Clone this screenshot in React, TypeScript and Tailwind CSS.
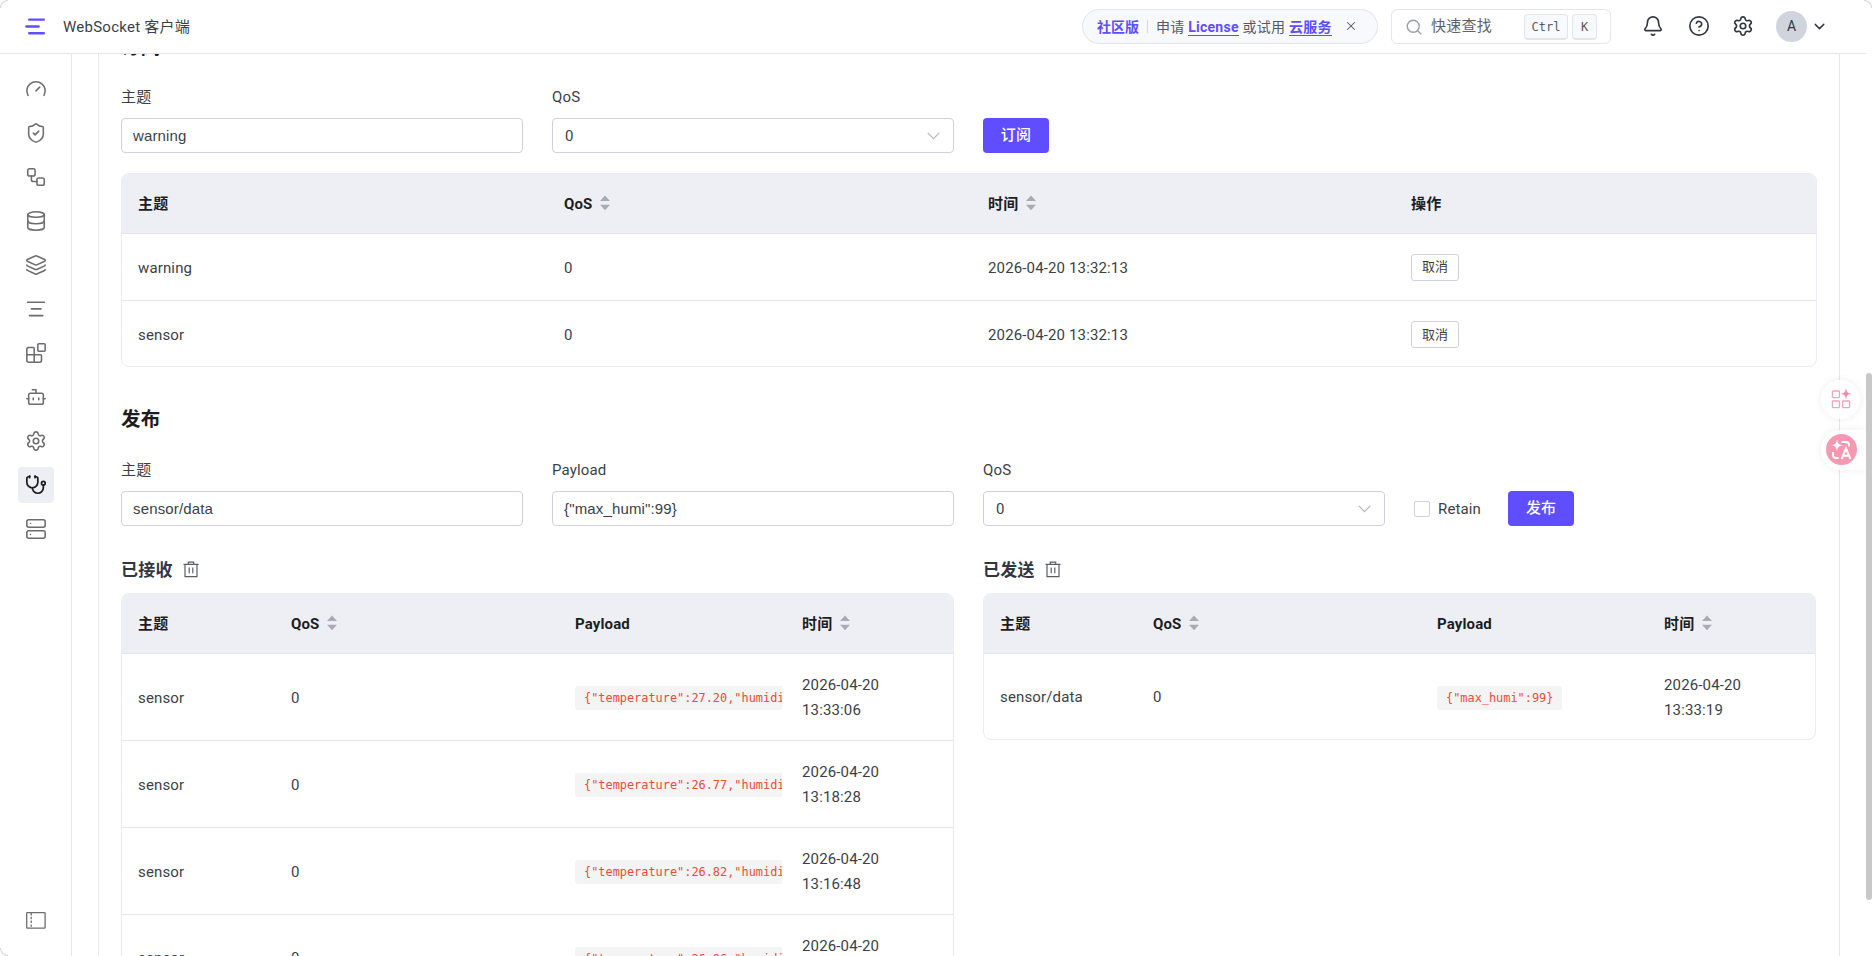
import { useState } from "react";
import type { ReactNode } from "react";
import {
  Bell,
  Blocks,
  Bot,
  ChevronDown,
  CircleQuestionMark,
  Database,
  Gauge,
  Layers,
  Search,
  Server,
  Settings,
  ShieldCheck,
  Stethoscope,
  Workflow,
  X,
} from "lucide-react";

type Message = { topic: string; qos: number; payload: string; date: string; time: string };

const subscriptions = [
  { topic: "warning", qos: 0, time: "2026-04-20 13:32:13" },
  { topic: "sensor", qos: 0, time: "2026-04-20 13:32:13" },
];

const received: Message[] = [
  { topic: "sensor", qos: 0, payload: '{"temperature":27.20,"humidity"', date: "2026-04-20", time: "13:33:06" },
  { topic: "sensor", qos: 0, payload: '{"temperature":26.77,"humidity"', date: "2026-04-20", time: "13:18:28" },
  { topic: "sensor", qos: 0, payload: '{"temperature":26.82,"humidity"', date: "2026-04-20", time: "13:16:48" },
  { topic: "sensor", qos: 0, payload: '{"temperature":26.86,"humidity"', date: "2026-04-20", time: "13:15:08" },
];

const sent: Message[] = [
  { topic: "sensor/data", qos: 0, payload: '{"max_humi":99}', date: "2026-04-20", time: "13:33:19" },
];

function FlowLines() {
  return (
    <svg width="20" height="20" viewBox="0 0 20 20" fill="none" stroke="currentColor" strokeWidth="1.6" strokeLinecap="round">
      <path d="M1.6 3.2h16.8M5.4 9.9h9.6M3.4 16.6h13.4" />
    </svg>
  );
}

const navItems: { key: string; icon: ReactNode }[] = [
  { key: "dashboard", icon: <Gauge size={22} strokeWidth={1.7} /> },
  { key: "security", icon: <ShieldCheck size={22} strokeWidth={1.7} /> },
  { key: "flows", icon: <Workflow size={22} strokeWidth={1.7} /> },
  { key: "data", icon: <Database size={22} strokeWidth={1.7} /> },
  { key: "layers", icon: <Layers size={22} strokeWidth={1.7} /> },
  { key: "queue", icon: <FlowLines /> },
  { key: "plugins", icon: <Blocks size={22} strokeWidth={1.7} /> },
  { key: "bot", icon: <Bot size={22} strokeWidth={1.7} /> },
  { key: "settings", icon: <Settings size={22} strokeWidth={1.7} /> },
  { key: "diagnose", icon: <Stethoscope size={22} strokeWidth={1.9} /> },
  { key: "cluster", icon: <Server size={22} strokeWidth={1.7} /> },
];

function SortCaret() {
  return (
    <svg width="10" height="16" viewBox="0 0 10 16" fill="#a8abb2" className="-mt-[3px] ml-2 shrink-0">
      <path d="M0 6 5 .6 10 6zM0 9.8h10L5 15.2z" />
    </svg>
  );
}

function TrashIcon() {
  return (
    <svg width="16" height="17" viewBox="0 0 16 17" fill="none" stroke="#5b5e66" strokeWidth="1.2" className="-mt-px">
      <path d="M.5 3.4h15M5.3 3.2V1.2h5.4v2M2 3.6v12h12v-12M6.2 6.6v5.6M9.8 6.6v5.6" />
    </svg>
  );
}

function Header() {
  return (
    <header className="flex h-[54px] w-[1866px] shrink-0 items-center border-b border-[#e4e5e8] pl-6">
      <svg width="22" height="20" viewBox="0 0 22 20" fill="none" stroke="#5e4eff" strokeWidth="2.4" strokeLinecap="round">
        <path d="M5.2 2.6h14.6M2.4 9.5h12.2M5.2 16.2h14.6" />
      </svg>
      <span className="ml-[17px] pt-px text-[15px] tracking-[0.25px] text-[#3c3f47]">WebSocket 客户端</span>

      <div className="ml-auto flex h-[35px] w-[296px] items-center rounded-full border border-[#e4e5ea] bg-[#f8f9fd] pl-[14px] text-[14px] text-[#555963]">
        <span className="pt-[2px] font-bold text-[#5e4eff]">社区版</span>
        <span className="mx-2 h-[13px] w-px bg-[#d3d6dd]" />
        <span className="pt-[2px] tracking-[0.25px]">
          申请 <a className="border-b border-[#5e4eff] font-bold text-[#5e4eff]">License</a> 或试用{" "}
          <a className="border-b border-[#5e4eff] font-bold text-[#5e4eff]">云服务</a>
        </span>
        <X size={14} strokeWidth={1.8} className="-mt-px ml-[12px]" />
      </div>

      <div className="ml-[13px] flex h-[35px] w-[220px] items-center rounded-md border border-[#e4e5ea] pl-[13px]">
        <Search size={18} strokeWidth={1.8} className="text-[#979cae]" />
        <span className="ml-2 pb-px text-[15px] tracking-[0.25px] text-[#5d616c]">快速查找</span>
        <kbd className="ml-auto flex h-[26px] w-[44px] items-center justify-center rounded-[4px] border border-b-2 border-[#e4e5ea] bg-[#f8f9fd] pt-px font-['DejaVu_Sans_Mono',monospace] text-[12px] text-[#555963]">
          Ctrl
        </kbd>
        <kbd className="mr-[13px] ml-1 flex h-[26px] w-[25px] items-center justify-center rounded-[4px] border border-b-2 border-[#e4e5ea] bg-[#f8f9fd] pt-px font-['DejaVu_Sans_Mono',monospace] text-[12px] text-[#555963]">
          K
        </kbd>
      </div>

      <div className="flex items-center pb-px text-[#343741]">
        <Bell size={22} strokeWidth={1.8} className="ml-[31px]" />
        <CircleQuestionMark size={22} strokeWidth={1.8} className="ml-6" />
        <Settings size={22} strokeWidth={1.8} className="ml-[22px]" />
        <span className="ml-[22px] flex size-[31px] items-center justify-center rounded-full bg-[#d0d4dd] text-[14px]">A</span>
        <ChevronDown size={17} strokeWidth={2} className="mr-[38px] ml-[4px]" />
      </div>
    </header>
  );
}

function Sidebar() {
  const [active, setActive] = useState("diagnose");
  return (
    <nav className="flex w-[72px] shrink-0 flex-col items-center gap-2 border-r border-[#e4e5e8] pt-[17px] text-[#6d6d70]">
      {navItems.map((item) => (
        <button
          key={item.key}
          type="button"
          onClick={() => setActive(item.key)}
          className={`flex size-9 items-center justify-center rounded ${
            item.key === active ? "bg-[#eeeff5] text-[#1d1d1f]" : ""
          }`}
        >
          {item.icon}
        </button>
      ))}
      <svg width="20" height="17" viewBox="0 0 20 17" fill="none" stroke="currentColor" strokeWidth="1.3" className="mt-auto mb-[27px]">
        <rect x=".7" y=".7" width="18.4" height="15.4" rx=".6" />
        <path d="M5.2 1v15" strokeDasharray="2.4 1.4" />
      </svg>
    </nav>
  );
}

function Field({ label, children }: { label: string; children: ReactNode }) {
  return (
    <div>
      <label className="block h-[23px] text-[15px] leading-[25px]">{label}</label>
      <div className="mt-[10px]">{children}</div>
    </div>
  );
}

function TextInput({ initial }: { initial: string }) {
  const [value, setValue] = useState(initial);
  return (
    <input
      value={value}
      onChange={(e) => setValue(e.target.value)}
      className="block h-[35px] w-full rounded-[4px] border border-[#cfd2de] px-[11px] font-['Liberation_Sans',sans-serif] text-[15px] tracking-[0.15px] outline-none"
    />
  );
}

function Select({ value }: { value: string }) {
  return (
    <div className="flex h-[35px] items-center justify-between rounded-[4px] border border-[#cfd2de] pr-[13px] pl-3 text-[15px]">
      <span className="pt-[2px]">{value}</span>
      <svg width="13" height="8" viewBox="0 0 13 8" fill="none" stroke="#b4b7bf" strokeWidth="1.2">
        <path d="m.8.8 5.7 5.8L12.2.8" />
      </svg>
    </div>
  );
}

function PrimaryButton({ children }: { children: ReactNode }) {
  return (
    <button type="button" className="h-[35px] w-[66px] rounded-[4px] bg-[#5e4eff] text-[15px] font-medium text-white">
      {children}
    </button>
  );
}

function SubscriptionTable() {
  const grid = "grid grid-cols-[426px_424px_423px_1fr] items-center pl-4 [&>span]:pt-[2px]";
  return (
    <div className="mt-5 h-[194px] overflow-hidden rounded-lg border border-[#ebecf2] text-[15px]">
      <div className={`${grid} h-[60px] border-b border-[#e4e5ea] bg-[#eeeff5] font-bold text-[#1d1d1f]`}>
        <span>主题</span>
        <span className="flex items-center">QoS<SortCaret /></span>
        <span className="flex items-center">时间<SortCaret /></span>
        <span>操作</span>
      </div>
      {subscriptions.map((s) => (
        <div key={s.topic} className={`${grid} h-[67px] border-b border-[#e4e5e8] last:border-b-0`}>
          <span>{s.topic}</span>
          <span>{s.qos}</span>
          <span>{s.time}</span>
          <button type="button" className="h-[27px] w-12 rounded-[3px] border border-[#cfd2de] text-[13px] tracking-normal">
            取消
          </button>
        </div>
      ))}
    </div>
  );
}

function MessageTable({ title, rows }: { title: string; rows: Message[] }) {
  const grid = "grid grid-cols-[153px_284px_227px_1fr] items-center pl-4 [&>span]:pt-[2px]";
  return (
    <div>
      <div className="flex h-6 items-center gap-[10px]">
        <h3 className="pt-[2px] text-[17px] font-bold tracking-[0.3px] text-[#33363f]">{title}</h3>
        <TrashIcon />
      </div>
      <div className="mt-[11px] overflow-hidden rounded-lg border border-[#ebecf2] text-[15px]">
        <div className={`${grid} h-[60px] border-b border-[#e4e5ea] bg-[#eeeff5] font-bold text-[#1d1d1f]`}>
          <span>主题</span>
          <span className="flex items-center">QoS<SortCaret /></span>
          <span>Payload</span>
          <span className="flex items-center">时间<SortCaret /></span>
        </div>
        {rows.map((m) => (
          <div key={m.time} className={`${grid} h-[87px] border-b border-[#e4e5e8] last:h-[85px] last:border-b-0`}>
            <span>{m.topic}</span>
            <span>{m.qos}</span>
            <div className="flex w-[207px] overflow-hidden pt-[2px]">
              <code className="h-6 shrink-0 rounded-[3px] bg-[#f4f4f4] px-[9px] font-['DejaVu_Sans_Mono',monospace] text-[11.9px] leading-6 tracking-normal whitespace-nowrap text-[#ec4a3b]">
                {m.payload}
              </code>
            </div>
            <span className="leading-[25px]">
              {m.date}
              <br />
              {m.time}
            </span>
          </div>
        ))}
      </div>
    </div>
  );
}

// Browser helper buttons floating over the right edge
function FloatingTools() {
  return (
    <>
      <div className="absolute top-[380px] left-[1821px] flex size-[39px] items-center justify-center rounded-full bg-white/90 pb-px shadow-[0_0_8px_rgba(0,0,0,0.07)]">
        <svg width="20" height="20" viewBox="0 0 20 20" fill="none" stroke="#f5a3b9" strokeWidth="1.3">
          <rect x="1.4" y="2" width="7" height="6.6" rx=".8" />
          <rect x="1.4" y="12" width="7" height="6.6" rx=".8" />
          <rect x="11.6" y="12" width="7" height="6.6" rx=".8" />
          <path d="M15 0c.7 3.300 1.500 4.200 4.600 4.800-3.100.6-3.900 1.500-4.600 4.800-.7-3.300-1.500-4.200-4.600-4.800C13.500 4.200 14.300 3.300 15 0z" fill="#f28aa6" stroke="#f28aa6" strokeWidth=".4" />
        </svg>
      </div>
      <div className="absolute top-[430px] left-[1821px] flex h-10 w-[45px] items-center rounded-l-full bg-white/90 pb-px pl-[5px] shadow-[0_0_8px_rgba(0,0,0,0.07)]">
        <svg width="31" height="31" viewBox="0 0 31 31" fill="none" stroke="#fff" strokeWidth="2">
          <circle cx="15.5" cy="15.5" r="15.5" fill="#f499b1" stroke="none" />
          <path d="M11 5.6c.7 4 1.6 5 5.500 5.700-3.900.8-4.800 1.800-5.500 5.800-.7-4-1.600-5-5.500-5.800 3.900-.7 4.800-1.700 5.500-5.700z" fill="#fff" stroke="none" />
          <path d="M15.500 8h4.500a3 3 0 0 1 3 3v1.500M7 18v3a3 3 0 0 0 3 3h2.500" />
          <path d="m15.600 25 4.400-10.500L24.400 25M17.200 21.800h5.600" />
        </svg>
      </div>
    </>
  );
}

export default function App() {
  const [retain, setRetain] = useState(false);

  return (
    <div className="relative flex h-[956px] w-[1872px] flex-col overflow-hidden bg-white font-['Roboto','Noto_Sans_CJK_SC',sans-serif] text-[#3c3f47]">
      <Header />
      <div className="flex min-h-0 flex-1">
        <Sidebar />
        <main className="flex min-w-0 flex-1 overflow-hidden pl-[26px] tracking-[0.14px]">
          <div className="w-[1742px] shrink-0 border-x border-[#e4e5e8] px-[22px]">
            <h2 className="-mt-[22px] h-7 text-[19.5px] leading-[31px] font-bold text-[#1d1d1f]">订阅</h2>
            <div className="mt-[25px] grid w-[1695px] grid-cols-4 items-end gap-x-[29px]">
              <Field label="主题">
                <TextInput initial="warning" />
              </Field>
              <Field label="QoS">
                <Select value="0" />
              </Field>
              <PrimaryButton>订阅</PrimaryButton>
            </div>
            <SubscriptionTable />

            <h2 className="mt-[38px] h-7 text-[19.5px] leading-[30px] font-bold text-[#1d1d1f]">发布</h2>
            <div className="mt-[25px] grid w-[1695px] grid-cols-4 items-end gap-x-[29px]">
              <Field label="主题">
                <TextInput initial="sensor/data" />
              </Field>
              <Field label="Payload">
                <TextInput initial='{"max_humi":99}' />
              </Field>
              <Field label="QoS">
                <Select value="0" />
              </Field>
              <div className="flex h-[35px] items-center">
                <label className="flex items-center gap-2 text-[15px]">
                  <input
                    type="checkbox"
                    checked={retain}
                    onChange={(e) => setRetain(e.target.checked)}
                    className="size-4 appearance-none rounded-[2px] border border-[#cfd2de] checked:bg-[#5e4eff]"
                  />
                  <span className="pt-px">Retain</span>
                </label>
                <div className="ml-[27px]">
                  <PrimaryButton>发布</PrimaryButton>
                </div>
              </div>
            </div>

            <div className="mt-8 grid w-[1695px] grid-cols-2 items-start gap-x-[29px]">
              <MessageTable title="已接收" rows={received} />
              <MessageTable title="已发送" rows={sent} />
            </div>
          </div>
        </main>
      </div>

      <FloatingTools />
      <div className="absolute top-[373px] right-0 h-[527px] w-[6px] rounded-full bg-[#c8c8c8]" />
      {/* window corners */}
      <div className="absolute top-0 left-0 size-2 rounded-tl-lg border-t border-l border-[#d4d4d4]" />
      <div className="absolute top-0 right-0 size-2 rounded-tr-lg border-t border-r border-[#d4d4d4]" />
      <div className="absolute bottom-0 left-0 size-2 rounded-bl-lg border-b border-l border-[#d4d4d4]" />
    </div>
  );
}
